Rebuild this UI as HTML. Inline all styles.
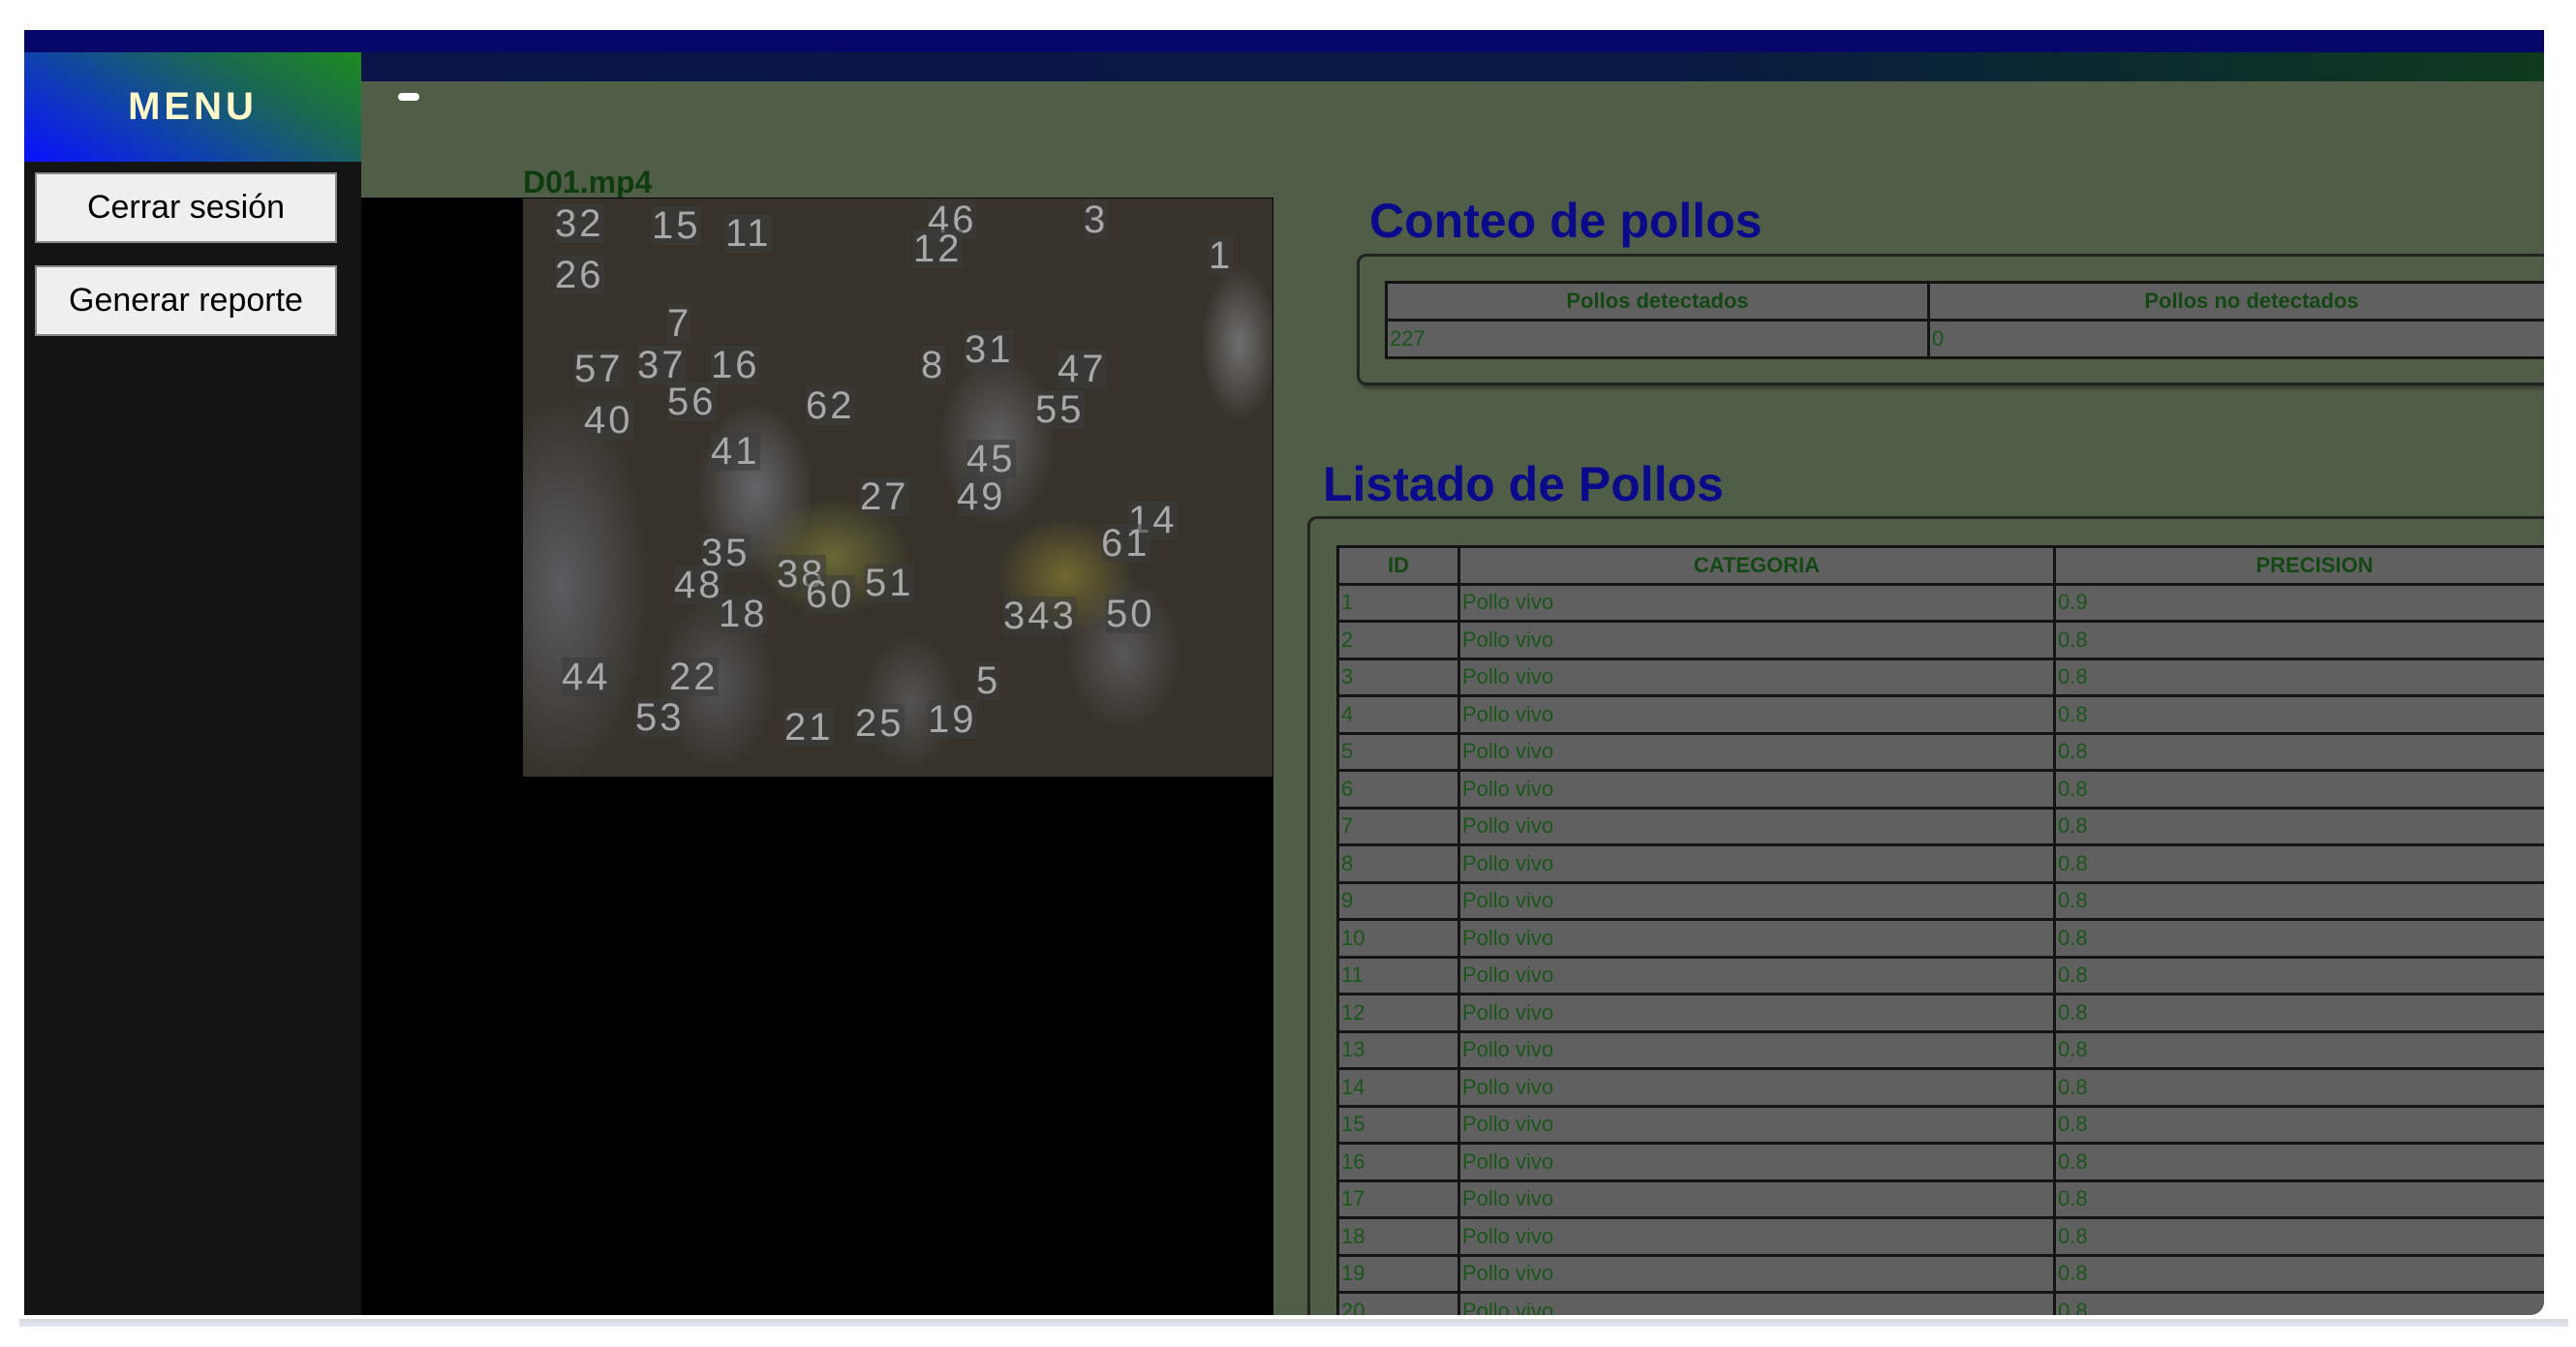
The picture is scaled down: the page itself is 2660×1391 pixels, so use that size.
<!DOCTYPE html>
<html><head><meta charset="utf-8"><style>
*{margin:0;padding:0;box-sizing:border-box}
html,body{width:2660px;height:1391px;overflow:hidden}
body{background:#fff;position:relative;font-family:"Liberation Sans",sans-serif}
#frame{position:absolute;left:25px;top:31px;width:2615px;height:1327px;overflow:hidden;background:#505e47;border-bottom-right-radius:14px}
.topbar{position:absolute;left:0;top:0;width:100%;height:23px;background:#07076a}
.strip{position:absolute;left:348px;top:23px;right:0;height:30px;background:linear-gradient(90deg,#0a1448 0%,#0a1a44 60%,#0b2a30 80%,#0f3a1e 100%)}
.side{position:absolute;left:0;top:23px;width:348px;bottom:0;background:#141414}
.menu{position:absolute;left:0;top:23px;width:348px;height:113px;background:linear-gradient(30deg,#0a10ff 0%,#1040b0 35%,#1a6a50 70%,#1e8a1e 100%);color:#fff8c8;font-weight:bold;font-size:40px;letter-spacing:4px;text-align:center;line-height:113px}
.btn{position:absolute;left:11px;width:312px;height:73px;background:#efefef;border:2px solid #888;color:#000;font-size:34px;text-align:center;line-height:69px}
.dot{position:absolute;left:386px;top:65px;width:22px;height:8px;border-radius:4px;background:#fff}
.fname{position:absolute;left:515px;top:139px;font-size:32px;font-weight:bold;color:#0e3c0e}
.black{position:absolute;left:348px;top:173px;width:942px;bottom:0;background:#000}
.video{position:absolute;left:515px;top:174px;width:774px;height:597px;overflow:hidden;background:
radial-gradient(ellipse 60px 90px at 240px 300px,rgba(150,150,170,.5),transparent),
radial-gradient(ellipse 80px 60px at 320px 370px,rgba(140,140,60,.6),transparent),
radial-gradient(ellipse 70px 60px at 560px 390px,rgba(150,140,50,.6),transparent),
radial-gradient(ellipse 90px 200px at 40px 400px,rgba(130,130,150,.5),transparent),
radial-gradient(ellipse 40px 80px at 740px 150px,rgba(170,170,180,.5),transparent),
radial-gradient(ellipse 60px 90px at 490px 250px,rgba(150,150,165,.45),transparent),
radial-gradient(ellipse 60px 90px at 200px 500px,rgba(130,130,150,.4),transparent),
radial-gradient(ellipse 60px 80px at 620px 470px,rgba(140,140,155,.4),transparent),
radial-gradient(ellipse 50px 70px at 400px 520px,rgba(140,140,155,.35),transparent),
#37332b}
.video span{position:absolute;color:#a8a8a8;font-size:40px;line-height:1;letter-spacing:3px;background:rgba(60,60,60,.55)}
h2{position:absolute;color:#0a0a8a;font-size:50px;font-weight:bold}
.box{position:absolute;border:3px solid #222;border-right:none;border-radius:10px 0 0 10px;box-shadow:2px 3px 4px rgba(0,0,0,.4)}
table{position:absolute;border-collapse:collapse;background:#606060;color:#1a561a;font-size:22px}
td,th{border:3px solid #141414;text-align:left;padding:0 2px}
th{text-align:center;font-weight:bold;color:#134813}
</style></head><body>
<div id="frame" style="width:2602px">
<div class="topbar"></div>
<div class="strip"></div>
<div class="side"></div>
<div class="menu">MENU</div>
<div class="btn" style="top:147px">Cerrar sesión</div>
<div class="btn" style="top:243px">Generar reporte</div>
<div class="dot"></div>
<div class="fname">D01.mp4</div>
<div class="black"></div>
<div class="video">
<span style="left:33px;top:6px">32</span><span style="left:133px;top:8px">15</span><span style="left:209px;top:16px">11</span><span style="left:418px;top:2px">46</span><span style="left:403px;top:32px">12</span><span style="left:579px;top:2px">3</span><span style="left:708px;top:39px">1</span><span style="left:33px;top:59px">26</span><span style="left:149px;top:109px">7</span><span style="left:53px;top:156px">57</span><span style="left:118px;top:152px">37</span><span style="left:194px;top:152px">16</span><span style="left:411px;top:152px">8</span><span style="left:456px;top:136px">31</span><span style="left:552px;top:156px">47</span><span style="left:149px;top:190px">56</span><span style="left:292px;top:194px">62</span><span style="left:529px;top:198px">55</span><span style="left:63px;top:209px">40</span><span style="left:194px;top:241px">41</span><span style="left:458px;top:249px">45</span><span style="left:348px;top:288px">27</span><span style="left:448px;top:288px">49</span><span style="left:625px;top:312px">14</span><span style="left:597px;top:336px">61</span><span style="left:184px;top:346px">35</span><span style="left:262px;top:368px">38</span><span style="left:156px;top:379px">48</span><span style="left:292px;top:389px">60</span><span style="left:353px;top:377px">51</span><span style="left:202px;top:409px">18</span><span style="left:496px;top:411px">343</span><span style="left:602px;top:409px">50</span><span style="left:40px;top:474px">44</span><span style="left:151px;top:474px">22</span><span style="left:116px;top:516px">53</span><span style="left:270px;top:526px">21</span><span style="left:343px;top:522px">25</span><span style="left:418px;top:518px">19</span><span style="left:468px;top:478px">5</span>
</div>
<h2 style="left:1389px;top:168px">Conteo de pollos</h2>
<div class="box" style="left:1376px;top:231px;width:1260px;height:136px"></div>
<table style="left:1405px;top:259px;width:1230px">
<tr style="height:39px"><th style="width:560px">Pollos detectados</th><th>Pollos no detectados</th></tr>
<tr style="height:39px"><td>227</td><td>0</td></tr>
</table>
<h2 style="left:1341px;top:440px">Listado de Pollos</h2>
<div class="box" style="left:1325px;top:502px;width:1320px;height:900px"></div>
<table style="left:1355px;top:532px;width:1280px">
<tr style="height:38.5px"><th style="width:125px">ID</th><th style="width:615px">CATEGORIA</th><th>PRECISION</th></tr>
<tr style="height:38.5px"><td>1</td><td>Pollo vivo</td><td>0.9</td></tr>
<tr style="height:38.5px"><td>2</td><td>Pollo vivo</td><td>0.8</td></tr>
<tr style="height:38.5px"><td>3</td><td>Pollo vivo</td><td>0.8</td></tr>
<tr style="height:38.5px"><td>4</td><td>Pollo vivo</td><td>0.8</td></tr>
<tr style="height:38.5px"><td>5</td><td>Pollo vivo</td><td>0.8</td></tr>
<tr style="height:38.5px"><td>6</td><td>Pollo vivo</td><td>0.8</td></tr>
<tr style="height:38.5px"><td>7</td><td>Pollo vivo</td><td>0.8</td></tr>
<tr style="height:38.5px"><td>8</td><td>Pollo vivo</td><td>0.8</td></tr>
<tr style="height:38.5px"><td>9</td><td>Pollo vivo</td><td>0.8</td></tr>
<tr style="height:38.5px"><td>10</td><td>Pollo vivo</td><td>0.8</td></tr>
<tr style="height:38.5px"><td>11</td><td>Pollo vivo</td><td>0.8</td></tr>
<tr style="height:38.5px"><td>12</td><td>Pollo vivo</td><td>0.8</td></tr>
<tr style="height:38.5px"><td>13</td><td>Pollo vivo</td><td>0.8</td></tr>
<tr style="height:38.5px"><td>14</td><td>Pollo vivo</td><td>0.8</td></tr>
<tr style="height:38.5px"><td>15</td><td>Pollo vivo</td><td>0.8</td></tr>
<tr style="height:38.5px"><td>16</td><td>Pollo vivo</td><td>0.8</td></tr>
<tr style="height:38.5px"><td>17</td><td>Pollo vivo</td><td>0.8</td></tr>
<tr style="height:38.5px"><td>18</td><td>Pollo vivo</td><td>0.8</td></tr>
<tr style="height:38.5px"><td>19</td><td>Pollo vivo</td><td>0.8</td></tr>
<tr style="height:38.5px"><td>20</td><td>Pollo vivo</td><td>0.8</td></tr>
<tr style="height:38.5px"><td>21</td><td>Pollo vivo</td><td>0.8</td></tr>
</table>
</div>
<div style="position:absolute;left:20px;top:1362px;width:2632px;height:8px;background:linear-gradient(180deg,#d8d8dc,#e2e6f2)"></div>
</body></html>
